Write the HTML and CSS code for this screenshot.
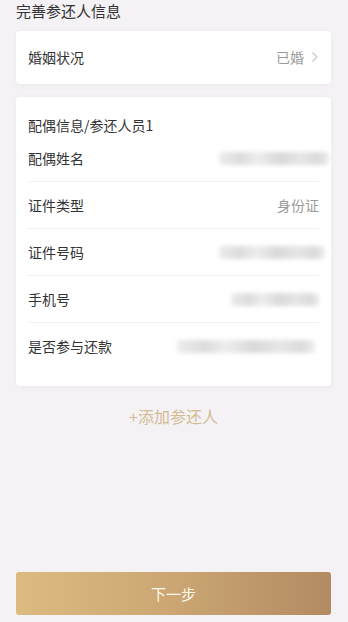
FILE: index.html
```html
<!DOCTYPE html>
<html lang="zh-CN">
<head>
  <meta charset="UTF-8" />
  <meta name="viewport" content="width=device-width, initial-scale=1.0"/>
  <title>完善参还人信息</title>
  <link rel="stylesheet" href="styles.css">
</head>
<body>
  <main class="page">
    <h1 class="page-title">完善参还人信息</h1>

    <div class="card card-single">
      <div class="row">
        <span class="row-label">婚姻状况</span>
        <span class="row-value">已婚
          <svg class="chevron" width="8" height="12" viewBox="0 0 8 12"><path d="M1.5 1.5 L6 6 L1.5 10.5" fill="none" stroke="#c8c8c8" stroke-width="1.2"/></svg>
        </span>
      </div>
    </div>

    <div class="card card-group">
      <div class="group-title">配偶信息/参还人员1</div>
      <div class="row bordered">
        <span class="row-label">配偶姓名</span>
        <span class="masked masked-name"></span>
      </div>
      <div class="row bordered">
        <span class="row-label">证件类型</span>
        <span class="row-value">身份证</span>
      </div>
      <div class="row bordered">
        <span class="row-label">证件号码</span>
        <span class="masked masked-id"></span>
      </div>
      <div class="row bordered">
        <span class="row-label">手机号</span>
        <span class="masked masked-phone"></span>
      </div>
      <div class="row">
        <span class="row-label">是否参与还款</span>
        <span class="masked masked-repay"></span>
      </div>
    </div>

    <div class="add-link">+添加参还人</div>

    <button class="next-btn">下一步</button>
  </main>
</body>
</html>
```

FILE: styles.css
```css
body {
  margin: 0;
  padding: 0;
  font-family: "Noto Sans CJK SC", "Noto Sans", sans-serif;
  background-color: #f4f2f5;
  color: #333;
}

.page {
  display: flex;
  flex-direction: column;
  min-height: 622px;
  padding: 0 17px 0 16px;
  box-sizing: border-box;
}

.page-title {
  margin: 0;
  font-size: 15px;
  line-height: 22px;
  font-weight: normal;
  color: #333;
}

.card {
  background: #fff;
  border-radius: 4px;
  box-shadow: 0 1px 6px rgba(0, 0, 0, 0.04);
}

.card-single {
  margin-top: 9px;
  height: 53px;
  padding: 0 12px 2px;
  box-sizing: border-box;
  display: flex;
  flex-direction: column;
  justify-content: center;
}

.card-group {
  margin-top: 13px;
  padding: 18px 12px 17px;
}

.group-title {
  font-size: 14px;
  line-height: 20px;
  color: #333;
}

.row {
  display: flex;
  align-items: center;
  justify-content: space-between;
  height: 46px;
  font-size: 14px;
}

.row.bordered {
  border-bottom: 1px solid #efefef;
}

.row-label {
  color: #333;
}

.row-value {
  color: #9a9a9a;
  display: flex;
  align-items: center;
  gap: 7px;
}

.chevron {
  display: block;
}

.masked {
  display: block;
  height: 13px;
  border-radius: 3px;
  background: linear-gradient(90deg, #ececec 0%, #dcdcdc 20%, #ededed 35%, #d9d9d9 55%, #e6e6e6 75%, #dadada 90%, #eeeeee 100%);
  filter: blur(2px);
}

.masked-name {
  width: 110px;
  margin-right: -10px;
}

.masked-id {
  width: 106px;
  margin-right: -6px;
}

.masked-phone {
  width: 88px;
}

.masked-repay {
  width: 138px;
  margin-right: 4px;
}

.add-link {
  margin-top: 19px;
  text-align: center;
  font-size: 16px;
  line-height: 22px;
  color: #d3bb91;
}

.next-btn {
  margin-top: auto;
  margin-bottom: 7px;
  height: 43px;
  border: none;
  border-radius: 3px;
  background: linear-gradient(90deg, #dcbb80 0%, #cba673 50%, #b28b62 100%);
  color: #fff8ec;
  font-family: inherit;
  font-size: 15px;
}
```
